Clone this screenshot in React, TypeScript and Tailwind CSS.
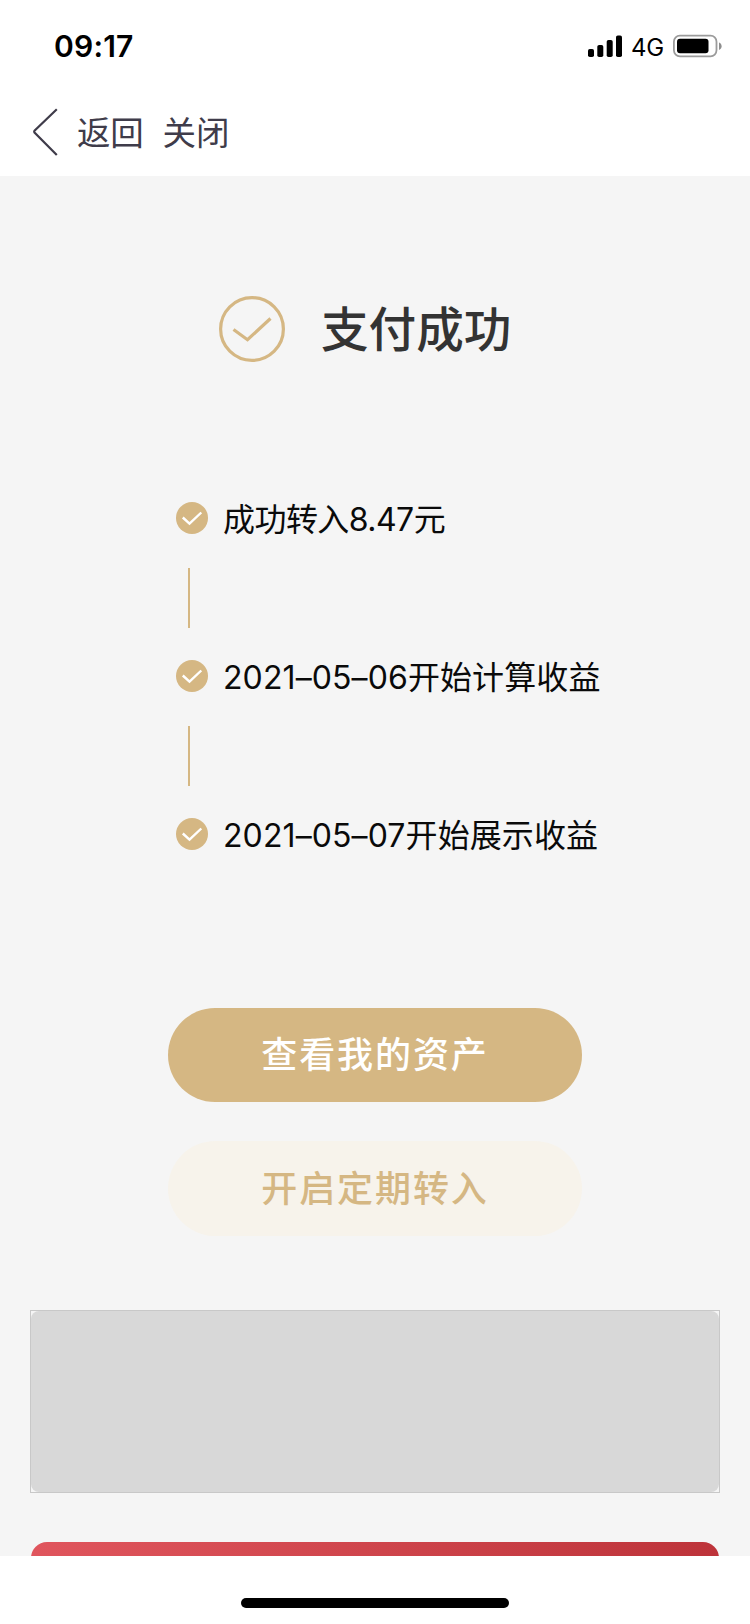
import React from 'react'

interface Step {
  text: string
  className: string
}

const steps: Step[] = [
  { text: '成功转入8.47元', className: 'tracking-[-0.55px]' },
  { text: '2021–05–06开始计算收益', className: 'tracking-[0.1px]' },
  { text: '2021–05–07开始展示收益', className: 'tracking-[0.1px]' },
]

const StatusBar: React.FC = () => {
  return (
    <div className="flex h-[92px] items-center justify-between pl-[54px] pr-[28px]">
      <span className="font-['Inter',sans-serif] text-[30px] font-semibold leading-none tracking-[0.2px] text-black">
        09:17
      </span>
      <div className="flex items-center">
        <svg className="h-[22px] w-[35px]" viewBox="0 0 35 22">
          <rect x="0" y="14" width="6" height="8" rx="1.8" />
          <rect x="9.3" y="10" width="6" height="12" rx="1.8" />
          <rect x="18.7" y="5" width="6" height="17" rx="1.8" />
          <rect x="28" y="0.5" width="6" height="21.5" rx="1.8" />
        </svg>
        <span className="ml-2 w-[33px] pt-[3px] font-['Inter',sans-serif] text-[24px] leading-none tracking-[-0.3px] text-black">
          4G
        </span>
        <svg className="ml-[9px] h-[24px] w-[49px]" viewBox="0 0 49 24">
          <rect x="0.9" y="1.7" width="42.6" height="20.6" rx="6" fill="none" stroke="#9b9b9b" strokeWidth="1.8" />
          <rect x="4" y="4.7" width="31.5" height="14.6" rx="3" />
          <path d="M46 8.5c1.7.6 2.6 2 2.6 3.7s-.9 3.1-2.6 3.7z" fill="#8e8e8e" />
        </svg>
      </div>
    </div>
  )
}

const NavBar: React.FC = () => {
  return (
    <nav className="flex h-[84px] items-center pb-[4px] pl-[32px] text-[33.5px] text-[#3f3c4a]">
      <svg className="h-[50px] w-[28px]" viewBox="0 0 28 50" fill="none" stroke="currentColor" strokeWidth="2.2">
        <path d="M24.8 2.2L2.5 23.6Q1.8 24.6 2.5 25.6L24.8 48" />
      </svg>
      <button className="ml-[17px] pb-[2px] leading-none tracking-[-0.3px]">返回</button>
      <button className="ml-[19px] pb-[2px] leading-none">关闭</button>
    </nav>
  )
}

const StepDot: React.FC = () => {
  return (
    <svg className="h-8 w-8 shrink-0" viewBox="0 0 32 32" fill="none">
      <circle cx="16" cy="16" r="16" fill="#d5b783" />
      <path d="M6.8 15.5L13.5 21.7L25.3 10.5" stroke="#fff" strokeWidth="2.4" />
    </svg>
  )
}

const App: React.FC = () => {
  return (
    <div className="flex h-[1624px] w-[750px] flex-col overflow-hidden bg-white font-['Noto_Sans_CJK_SC',sans-serif]">
      <StatusBar />
      <NavBar />

      <main className="flex h-[1380px] flex-col overflow-hidden bg-[#f5f5f5]">
        <div className="mt-[120px] flex h-[66px] items-center pl-[219px]">
          <svg className="h-[66px] w-[66px]" viewBox="0 0 66 66" fill="none" stroke="#d5b783" strokeWidth="3.2">
            <circle cx="33" cy="33" r="31.4" />
            <path d="M14.5 33.5L28.5 43.7L51.5 22.5" />
          </svg>
          <h1 className="ml-[36px] pb-[5px] text-[47.6px] font-medium leading-none text-[#333]">支付成功</h1>
        </div>

        <div className="mt-[140px] flex flex-col pl-[176px]">
          {steps.map((step, i) => (
            <React.Fragment key={step.text}>
              {i > 0 && <div className="mt-[34px] mb-[32px] ml-[12px] h-[60px] w-[2px] bg-[#d5b783]"></div>}
              <div className="flex h-8 items-center">
                <StepDot />
                <span
                  className={`ml-[15px] whitespace-nowrap pt-[3px] font-['Inter','Noto_Sans_CJK_SC',sans-serif] text-[32px] leading-none text-[#0a0a0a] ${step.className}`}
                >
                  {step.text}
                </span>
              </div>
            </React.Fragment>
          ))}
        </div>

        <div className="mt-[158px] flex flex-col items-center gap-[39px]">
          <button className="h-[94px] w-[414px] rounded-full bg-[#d5b783] pb-[6px] text-[36px] font-medium leading-none tracking-[1.9px] text-white">
            查看我的资产
          </button>
          <button className="h-[95px] w-[414px] rounded-full bg-[#f7f3eb] pb-[6px] text-[36px] font-medium leading-none tracking-[1.9px] text-[#d5b783]">
            开启定期转入
          </button>
        </div>

        <div className="mx-[30px] mt-[74px] h-[183px] shrink-0 border border-[#c8c8c8] bg-[#f5f5f5]">
          <div className="h-full rounded-[8px] bg-[#d8d8d8]"></div>
        </div>
        <div className="mx-[31px] mt-[49px] h-[120px] shrink-0 rounded-[16px] bg-linear-to-r from-[#e0555d] to-[#bd333a]"></div>
      </main>

      <footer className="flex flex-1 justify-center pt-[42px]">
        <div className="h-[10px] w-[268px] rounded-full bg-black"></div>
      </footer>
    </div>
  )
}

export default App
